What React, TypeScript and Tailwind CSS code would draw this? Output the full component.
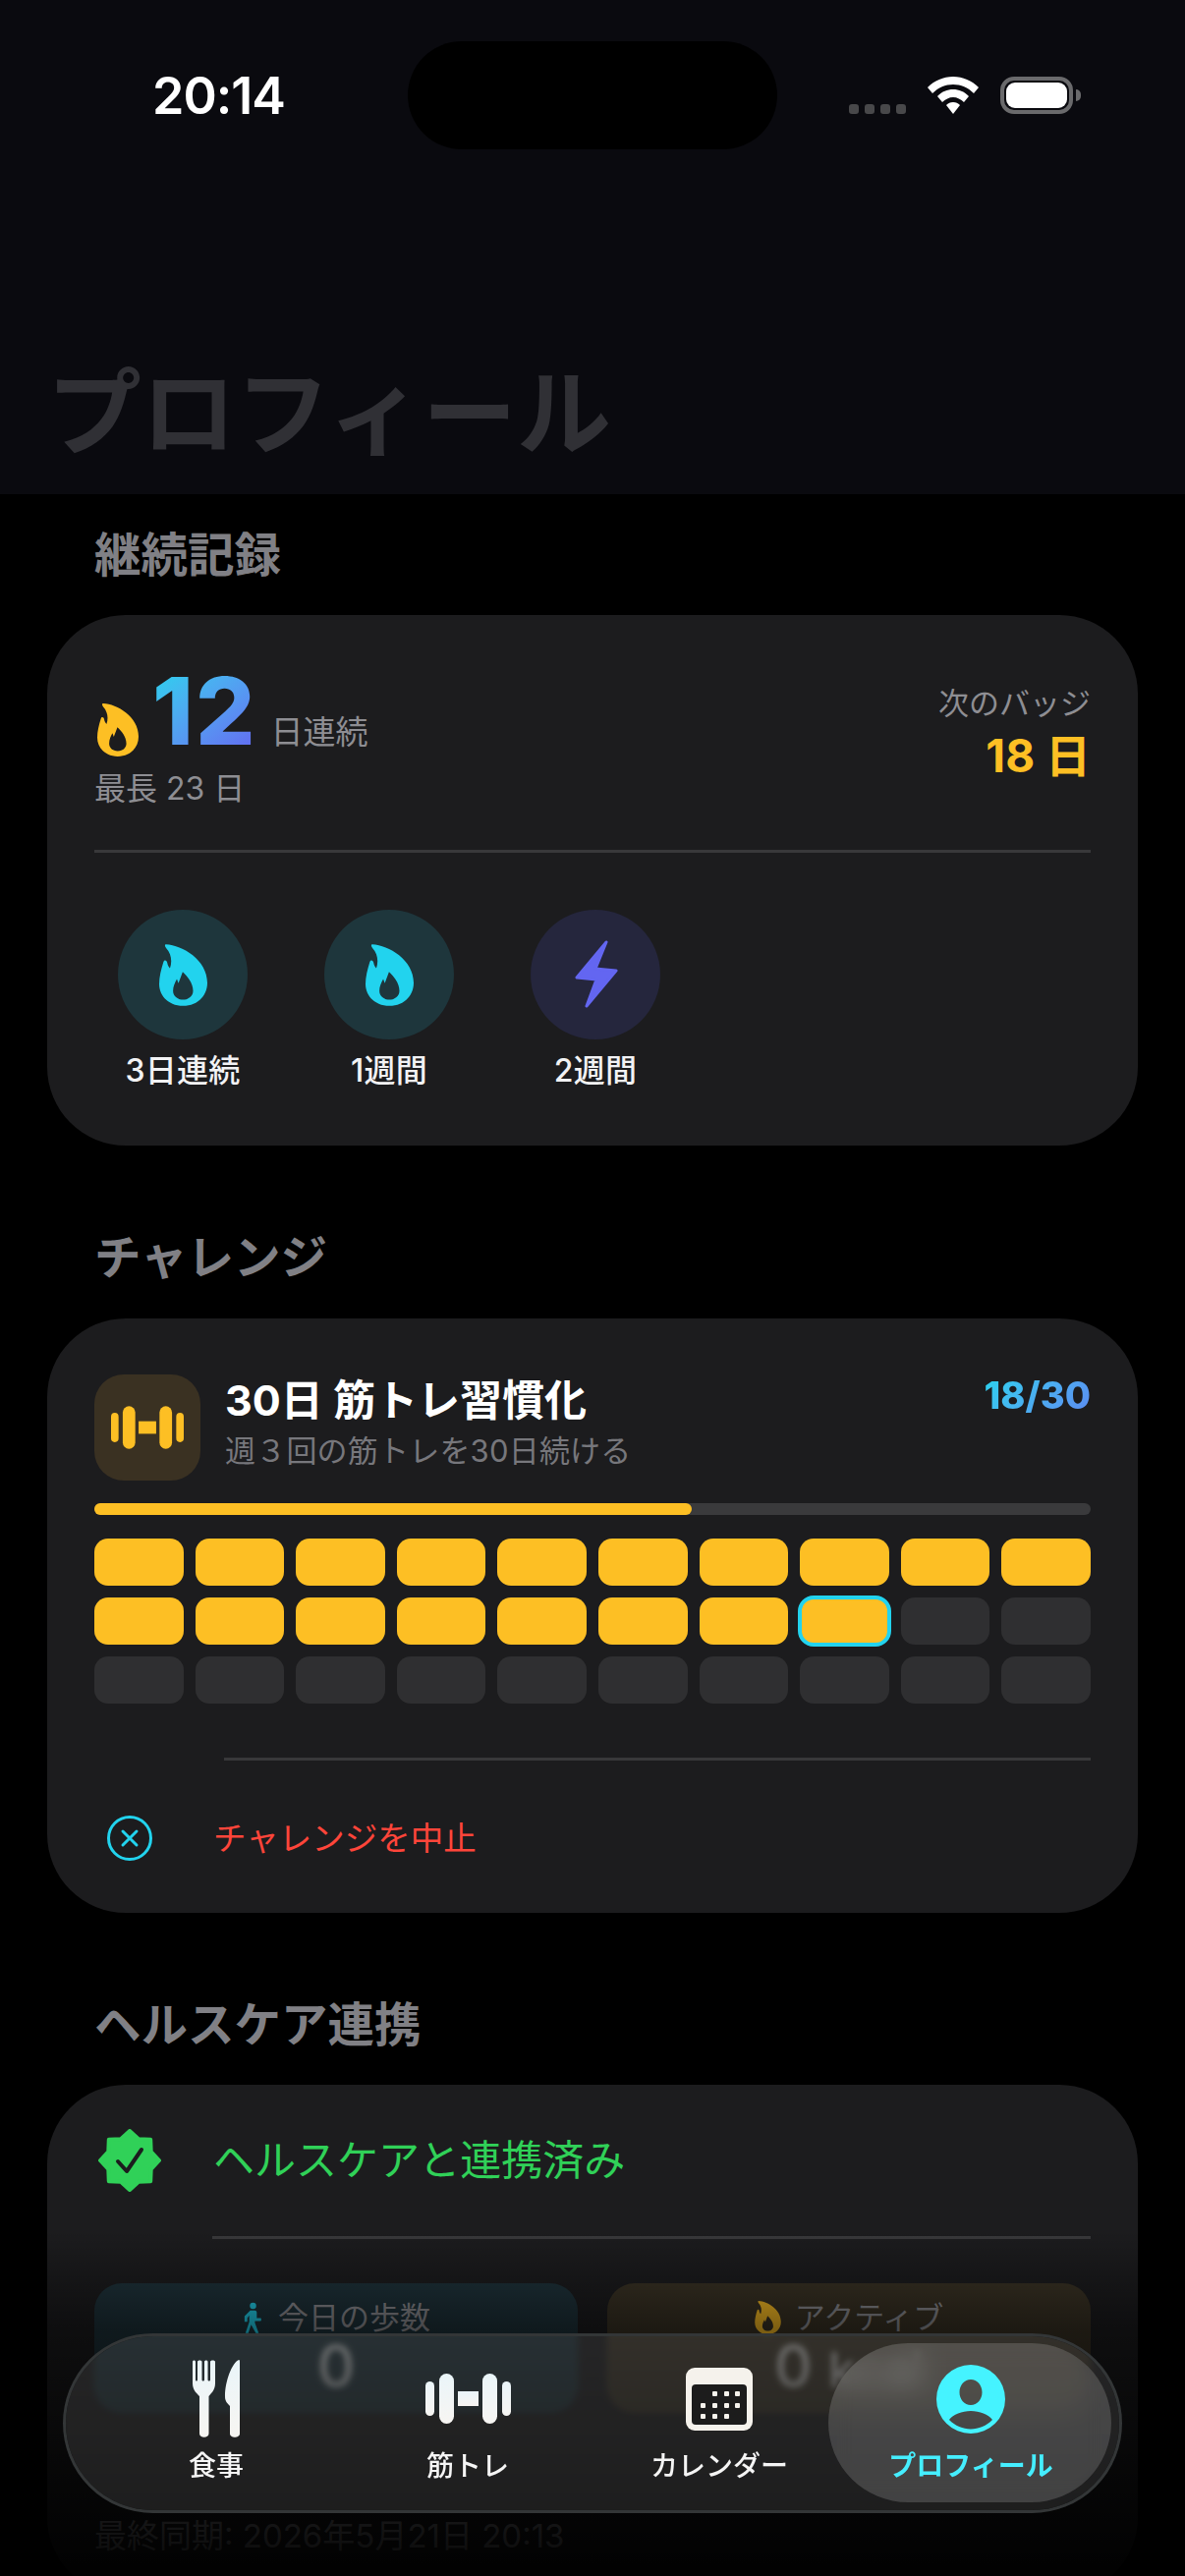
import React from 'react';

const FLAME =
  'M18 0C60 2 125 40 125 100C125 135 98 160 62 160C26 160 0 135 0 103C0 85 5 65 11 46C13 39 20 41 21 48C22 54 25 59 28 62C34 45 32 25 18 10C14 5 14 0 18 0ZM61 72C73 83 88 101 88 121C88 135 76 144 62 144C48 144 36 135 36 121C36 109 41 99 46 90L50 101Z';

const Flame = ({ className }: { className: string }) => (
  <svg viewBox="0 0 125 160" className={className}>
    <path d={FLAME} fillRule="evenodd" fill="currentColor" />
  </svg>
);

const Dumbbell = ({ className }: { className: string }) => (
  <svg viewBox="0 0 87 51" className={className} fill="currentColor">
    <rect x="0" y="8" width="9" height="35" rx="4.5" />
    <rect x="14" y="0" width="15" height="51" rx="7.5" />
    <rect x="33" y="18" width="21" height="15" />
    <rect x="58" y="0" width="15" height="51" rx="7.5" />
    <rect x="78" y="8" width="9" height="35" rx="4.5" />
  </svg>
);

// checkmark.seal: 8 tips, 16 vertices around the centre
const sealPoints = Array.from({ length: 16 }, (_, i) => {
  const a = (i * Math.PI) / 8 - Math.PI / 2;
  const r = i % 2 === 0 ? 30 : 23.5;
  return `${32 + r * Math.cos(a)},${32 + r * Math.sin(a)}`;
}).join(' ');

const Seal = () => (
  <svg viewBox="0 0 64 64" className="w-[64px] h-[64px]">
    <polygon points={sealPoints} fill="#30d158" stroke="#30d158" strokeWidth="4" strokeLinejoin="round" />
    <path d="M20 33L29 43L44 21" fill="none" stroke="#1c1c1e" strokeWidth="4" strokeLinecap="round" strokeLinejoin="round" />
  </svg>
);

const Walk = () => (
  <svg viewBox="0 0 24 34" className="w-[23px] h-[33px]" fill="#22d3ee">
    <circle cx="12" cy="4" r="3.4" />
    <path d="M9 9H14C15 9 16 10 16 11V17H20C21 17 21 20 20 20H14V22L18 33H15L10 24L7 33H4L8 21V14L6 17V21H3V15Z" />
  </svg>
);

const Badge = ({ label, bg, children }: { label: string; bg: string; children: React.ReactNode }) => (
  <div className="w-[210px] flex flex-col items-center">
    <div className={`w-[132px] h-[132px] rounded-full flex items-center justify-center ${bg}`}>{children}</div>
    <span className="mt-[10px] text-[32px] leading-[44px] font-medium tracking-[0.2px] text-[#f2f2f4]">{label}</span>
  </div>
);

const SectionTitle = ({ children, className }: { children: React.ReactNode; className: string }) => (
  <h2 className={`ml-[96px] text-[47.5px] leading-[60px] font-bold text-[#808085] ${className}`}>{children}</h2>
);

const NavItem = ({ label, active, children }: { label: string; active?: boolean; children: React.ReactNode }) => (
  <div className="w-[256px] flex flex-col items-center justify-end h-[162px] pb-[20px]">
    <div className="h-[80px] flex items-center justify-center">{children}</div>
    <span className={`mt-[10px] text-[28px] leading-[36px] ${active ? 'font-bold text-[#45eeff]' : 'font-medium text-[#f5f5f5]'}`}>{label}</span>
  </div>
);

export default function App() {
  const cells = Array.from({ length: 30 }, (_, i) => i);

  return (
    <div className="relative w-[1206px] h-[2622px] overflow-hidden bg-black font-['Inter','Noto_Sans_CJK_JP',sans-serif]">
      {/* header */}
      <div className="h-[503px] bg-[#0a0a0f] flex flex-col">
        <div className="flex items-start h-[340px] pt-[70px] pl-[155px] pr-[106px]">
          <span className="text-[52px] leading-[56px] font-semibold text-white tracking-[-1px]">20:14</span>
          <div className="ml-auto flex items-start gap-[22px] pt-[8px]">
            <div className="flex gap-[6px] mt-[28px]">
              <i className="w-[10px] h-[10px] rounded-[3px] bg-[#48484a]" />
              <i className="w-[10px] h-[10px] rounded-[3px] bg-[#48484a]" />
              <i className="w-[10px] h-[10px] rounded-[3px] bg-[#48484a]" />
              <i className="w-[10px] h-[10px] rounded-[3px] bg-[#48484a]" />
            </div>
            <svg viewBox="0 0 52 38" className="w-[52px] h-[38px]" fill="white">
              <path d="M26 0C36 0 45 4 52 11L47 17C41 11 34 8 26 8C18 8 11 11 5 17L0 11C7 4 16 0 26 0Z" />
              <path d="M26 13C32 13 37 15 42 20L37 26C34 23 30 21 26 21C22 21 18 23 15 26L10 20C15 15 20 13 26 13Z" />
              <path d="M26 26C29 26 31 27 33 29L26 38L19 29C21 27 23 26 26 26Z" />
            </svg>
            <div className="flex items-center">
              <div className="w-[74px] h-[38px] rounded-[14px] border-[4px] border-[#6a6a6c] p-[2px]">
                <div className="w-full h-full rounded-[9px] bg-white" />
              </div>
              <div className="ml-[3px] w-[5px] h-[12px] rounded-r-full bg-[#6a6a6c]" />
            </div>
          </div>
        </div>
        <h1 className="ml-[48px] mt-[20px] text-[96px] leading-[120px] font-bold text-[#303035]">プロフィール</h1>
      </div>
      <div className="absolute left-[415px] top-[42px] w-[376px] h-[110px] rounded-full bg-black" />

      <SectionTitle className="mt-[32px] mb-[31px]">継続記録</SectionTitle>

      {/* streak */}
      <div className="mx-[48px] h-[540px] rounded-[80px] bg-[#1c1c1e] px-[48px] pt-[56px]">
        <div className="flex justify-between h-[129px]">
          <div>
            <div className="flex items-end h-[84px]">
              <Flame className="w-[42px] h-[54px] ml-[3px] mb-[-4px] text-[#fdbf24]" />
              <span className="ml-[14px] text-[95px] leading-[84px] font-extrabold tracking-[2px] bg-linear-to-br from-[#22d3ee] to-[#6366f1] bg-clip-text text-transparent">12</span>
              <span className="ml-[14px] mb-[1px] text-[33px] leading-[40px] text-[#8e8e93]">日連続</span>
            </div>
            <div className="mt-[17px] text-[32px] leading-[40px] text-[#8e8e93]">最長 23 日</div>
          </div>
          <div className="flex flex-col items-end pt-[14px]">
            <span className="text-[31px] leading-[40px] text-[#8e8e93]">次のバッジ</span>
            <span className="mt-[6px] text-[46px] leading-[54px] font-bold text-[#fdbf24]">18 日</span>
          </div>
        </div>
        <div className="h-[3px] bg-[#38383a] mt-[54px]" />
        <div className="flex mt-[58px] ml-[-15px]">
          <Badge label="3日連続" bg="bg-[#1e363c]"><Flame className="w-[49px] h-[63px] text-[#22d3ee]" /></Badge>
          <Badge label="1週間" bg="bg-[#1e363c]"><Flame className="w-[49px] h-[63px] text-[#22d3ee]" /></Badge>
          <Badge label="2週間" bg="bg-[#25263d]">
            <svg viewBox="-2 -2 45 70" className="w-[45px] h-[70px]">
              <path d="M31 0L1 36L21 38L11 65L41 29L20 27Z" fill="#6366f1" stroke="#6366f1" strokeWidth="3" strokeLinejoin="round" />
            </svg>
          </Badge>
        </div>
      </div>

      <SectionTitle className="mt-[84px] mb-[32px]">チャレンジ</SectionTitle>

      {/* challenge */}
      <div className="mx-[48px] h-[605px] rounded-[80px] bg-[#1c1c1e] px-[48px] pt-[57px]">
        <div className="flex h-[108px]">
          <div className="w-[108px] h-[108px] rounded-[30px] bg-[#3a3122] flex items-center justify-center">
            <Dumbbell className="w-[74px] h-[44px] text-[#fdbf24]" />
          </div>
          <div className="ml-[25px]">
            <div className="text-[43px] leading-[52px] font-bold text-white">30日 筋トレ習慣化</div>
            <div className="mt-[6px] text-[31px] leading-[40px] tracking-[0.2px] text-[#77777c]">週３回の筋トレを30日続ける</div>
          </div>
          <span className="ml-auto mt-[-2px] text-[38px] leading-[46px] font-extrabold bg-linear-to-br from-[#22d3ee] to-[#6366f1] bg-clip-text text-transparent">18/30</span>
        </div>
        <div className="mt-[23px] h-[12px] rounded-full bg-[#3a3a3c]">
          <div className="w-3/5 h-full rounded-full bg-[#fdbf24]" />
        </div>
        <div className="mt-[24px] grid grid-cols-10 gap-[12px]">
          {cells.map((i) => (
            <div
              key={i}
              className={`h-[48px] rounded-[14px] ${i < 18 ? 'bg-[#fdbf24]' : 'bg-[#2f2f31]'} ${i === 17 ? 'outline-[4px] outline-[#22d3ee] -outline-offset-[2px]' : ''}`}
            />
          ))}
        </div>
        <div className="ml-[132px] mt-[55px] h-[3px] bg-[#38383a]" />
        <div className="flex items-center h-[158px]">
          <svg viewBox="0 0 46 46" className="ml-[13px] w-[46px] h-[46px]" fill="none" stroke="#22d3ee" strokeWidth="3">
            <circle cx="23" cy="23" r="21.5" />
            <path d="M16 16L30 30M30 16L16 30" strokeLinecap="round" />
          </svg>
          <span className="ml-[62px] text-[33.5px] leading-[44px] text-[#ff453a]">チャレンジを中止</span>
        </div>
      </div>

      <SectionTitle className="mt-[84px] mb-[31px]">ヘルスケア連携</SectionTitle>

      {/* health */}
      <div className="mx-[48px] h-[520px] rounded-[80px] bg-[#1c1c1e] px-[48px] pt-[45px]">
        <div className="flex items-center h-[64px]">
          <div className="ml-[4px]"><Seal /></div>
          <span className="ml-[53px] text-[42px] leading-[54px] text-[#30d158]">ヘルスケアと連携済み</span>
        </div>
        <div className="ml-[120px] mt-[45px] h-[3px] bg-[#38383a]" />
        <div className="mt-[45px] flex gap-[30px]">
          <div className="flex-1 h-[132px] rounded-[28px] bg-[#1f333b] flex flex-col items-center pt-[16px]">
            <div className="flex items-center gap-[14px]">
              <Walk />
              <span className="text-[31px] leading-[38px] text-[#8e8e93]">今日の歩数</span>
            </div>
            <span className="mt-[-3px] text-[60px] leading-[66px] font-medium text-white/70">0</span>
          </div>
          <div className="flex-1 h-[132px] rounded-[28px] bg-[#3a3325] flex flex-col items-center pt-[16px]">
            <div className="flex items-center gap-[14px]">
              <Flame className="w-[27px] h-[34px] text-[#fdbf24]" />
              <span className="text-[31px] leading-[38px] text-[#8e8e93]">アクティブ</span>
            </div>
            <span className="mt-[-3px] text-[60px] leading-[66px] font-medium text-white/70">0 <span className="text-[50px]">kcal</span></span>
          </div>
        </div>
        <div className="mt-[105px] text-[33px] leading-[40px] text-[#8e8e93]">最終同期: 2026年5月21日 20:13</div>
      </div>

      {/* bottom fade over the scrolling content */}
      <div className="absolute left-0 right-0 top-[2270px] bottom-0 bg-[linear-gradient(to_bottom,rgba(0,0,0,0)_0px,rgba(0,0,0,0.5)_100px,rgba(0,0,0,0.88)_310px,rgba(0,0,0,0.95)_352px)]" />

      {/* tab bar */}
      <div className="absolute left-[64px] top-[2375px] w-[1078px] h-[183px]">
        <div className="absolute inset-0 rounded-full border-[3px] border-[#333637] bg-white/10 bg-clip-padding backdrop-blur-[3px]" />
        <div className="absolute left-[779px] top-[10px] w-[288px] h-[162px] rounded-full bg-white/[0.16] backdrop-blur-[12px]" />
        <div className="relative flex items-center h-full pl-[28px]">
          <NavItem label="食事">
            <svg viewBox="0 0 48 79" className="w-[48px] h-[79px]">
              <defs>
                <linearGradient id="ico" x1="0" y1="0" x2="0" y2="1">
                  <stop offset="0" stopColor="#eaf5f9" />
                  <stop offset="1" stopColor="#f7f5f2" />
                </linearGradient>
              </defs>
              <path d="M0 2C0 0 3 0 3 2V20C3 22 5 22 5 20V2C5 0 9.5 0 9.5 2V20C9.5 22 12 22 12 20V2C12 0 15.5 0 15.5 2V20C15.5 22 18 22 18 20V2C18 0 23 0 23 2V24C23 31 18 35 16.5 37V75C16.5 80 7 80 7 75V37C5 35 0 31 0 24Z" fill="url(#ico)" />
              <path d="M47 0C47.6 0 48 .6 48 2V75C48 80 38 80 38 75V47C34 43 33 41 33 37C33 22 40 3 47 0Z" fill="url(#ico)" />
            </svg>
          </NavItem>
          <NavItem label="筋トレ">
            <svg viewBox="0 0 87 51" className="w-[87px] h-[51px]" fill="url(#ico)">
              <rect x="0" y="8" width="9" height="35" rx="4.5" />
              <rect x="14" y="0" width="15" height="51" rx="7.5" />
              <rect x="33" y="18" width="21" height="15" />
              <rect x="58" y="0" width="15" height="51" rx="7.5" />
              <rect x="78" y="8" width="9" height="35" rx="4.5" />
            </svg>
          </NavItem>
          <NavItem label="カレンダー">
            <svg viewBox="0 0 68 64" className="w-[68px] h-[64px]">
              <rect width="68" height="64" rx="9" fill="#f5f2ec" />
              <rect x="6" y="17" width="56" height="41" rx="4" fill="#1c1c1c" />
              <g fill="#f5f2ec">
                <rect x="27" y="24" width="5" height="5" rx="1" />
                <rect x="39" y="24" width="5" height="5" rx="1" />
                <rect x="50" y="24" width="5" height="5" rx="1" />
                <rect x="15" y="36" width="5" height="5" rx="1" />
                <rect x="27" y="36" width="5" height="5" rx="1" />
                <rect x="39" y="36" width="5" height="5" rx="1" />
                <rect x="50" y="36" width="5" height="5" rx="1" />
                <rect x="15" y="47" width="5" height="5" rx="1" />
                <rect x="27" y="47" width="5" height="5" rx="1" />
                <rect x="39" y="47" width="5" height="5" rx="1" />
              </g>
            </svg>
          </NavItem>
          <NavItem label="プロフィール" active>
            <svg viewBox="0 0 70 70" className="w-[70px] h-[70px]">
              <path
                fillRule="evenodd"
                fill="#45f3ff"
                d="M35 0A35 35 0 1 1 35 70A35 35 0 1 1 35 0ZM35 15C28.5 15 23.5 20.8 23.5 28C23.5 35.2 28.5 41 35 41C41.5 41 46.5 35.2 46.5 28C46.5 20.8 41.5 15 35 15ZM13 56C19 62 27 65.5 35 65.5C43 65.5 51 62 57 56C53 50.5 44 47 35 47C26 47 17 50.5 13 56Z"
              />
            </svg>
          </NavItem>
        </div>
      </div>
    </div>
  );
}
